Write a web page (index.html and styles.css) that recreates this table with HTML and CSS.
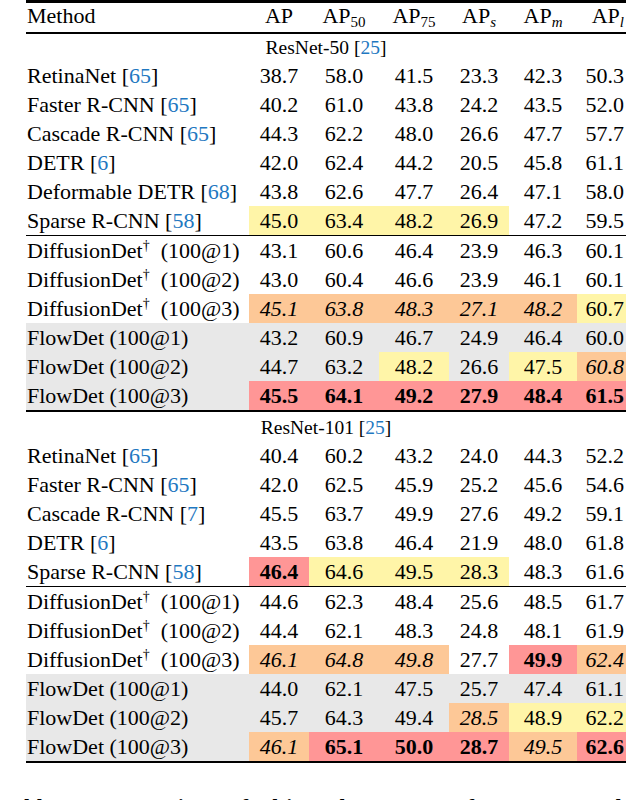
FILE: index.html
```html
<!DOCTYPE html>
<html>
<head>
<meta charset="utf-8">
<link rel="stylesheet" href="styles.css">
</head>
<body>
<table class="results">
  <colgroup>
    <col class="c-method"><col class="c-ap"><col class="c-ap50"><col class="c-ap75"><col class="c-aps"><col class="c-apm"><col class="c-apl">
  </colgroup>
  <thead>
    <tr class="head">
      <th class="method">Method</th>
      <th>AP</th>
      <th>AP<sub>50</sub></th>
      <th>AP<sub>75</sub></th>
      <th>AP<sub class="m">s</sub></th>
      <th>AP<sub class="m">m</sub></th>
      <th class="last">AP<sub class="m">l</sub></th>
    </tr>
  </thead>
  <tbody>
    <tr class="label"><td colspan="7">ResNet-50 [<span class="ref">25</span>]</td></tr>
    <tr><td class="method">RetinaNet [<span class="ref">65</span>]</td><td>38.7</td><td>58.0</td><td>41.5</td><td>23.3</td><td>42.3</td><td class="last">50.3</td></tr>
    <tr><td class="method">Faster R-CNN [<span class="ref">65</span>]</td><td>40.2</td><td>61.0</td><td>43.8</td><td>24.2</td><td>43.5</td><td class="last">52.0</td></tr>
    <tr><td class="method">Cascade R-CNN [<span class="ref">65</span>]</td><td>44.3</td><td>62.2</td><td>48.0</td><td>26.6</td><td>47.7</td><td class="last">57.7</td></tr>
    <tr><td class="method">DETR [<span class="ref">6</span>]</td><td>42.0</td><td>62.4</td><td>44.2</td><td>20.5</td><td>45.8</td><td class="last">61.1</td></tr>
    <tr><td class="method">Deformable DETR [<span class="ref">68</span>]</td><td>43.8</td><td>62.6</td><td>47.7</td><td>26.4</td><td>47.1</td><td class="last">58.0</td></tr>
    <tr class="mid"><td class="method">Sparse R-CNN [<span class="ref">58</span>]</td><td class="y">45.0</td><td class="y">63.4</td><td class="y">48.2</td><td class="y">26.9</td><td>47.2</td><td class="last">59.5</td></tr>
    <tr><td class="method">DiffusionDet<sup>†</sup> &nbsp;(100@1)</td><td>43.1</td><td>60.6</td><td>46.4</td><td>23.9</td><td>46.3</td><td class="last">60.1</td></tr>
    <tr><td class="method">DiffusionDet<sup>†</sup> &nbsp;(100@2)</td><td>43.0</td><td>60.4</td><td>46.6</td><td>23.9</td><td>46.1</td><td class="last">60.1</td></tr>
    <tr><td class="method">DiffusionDet<sup>†</sup> &nbsp;(100@3)</td><td class="o">45.1</td><td class="o">63.8</td><td class="o">48.3</td><td class="o">27.1</td><td class="o">48.2</td><td class="y last">60.7</td></tr>
    <tr class="gray"><td class="method">FlowDet (100@1)</td><td>43.2</td><td>60.9</td><td>46.7</td><td>24.9</td><td>46.4</td><td class="last">60.0</td></tr>
    <tr class="gray"><td class="method">FlowDet (100@2)</td><td>44.7</td><td>63.2</td><td class="y">48.2</td><td>26.6</td><td class="y">47.5</td><td class="o last">60.8</td></tr>
    <tr class="gray end"><td class="method">FlowDet (100@3)</td><td class="r">45.5</td><td class="r">64.1</td><td class="r">49.2</td><td class="r">27.9</td><td class="r">48.4</td><td class="r last">61.5</td></tr>

    <tr class="label label2"><td colspan="7">ResNet-101 [<span class="ref">25</span>]</td></tr>
    <tr><td class="method">RetinaNet [<span class="ref">65</span>]</td><td>40.4</td><td>60.2</td><td>43.2</td><td>24.0</td><td>44.3</td><td class="last">52.2</td></tr>
    <tr><td class="method">Faster R-CNN [<span class="ref">65</span>]</td><td>42.0</td><td>62.5</td><td>45.9</td><td>25.2</td><td>45.6</td><td class="last">54.6</td></tr>
    <tr><td class="method">Cascade R-CNN [<span class="ref">7</span>]</td><td>45.5</td><td>63.7</td><td>49.9</td><td>27.6</td><td>49.2</td><td class="last">59.1</td></tr>
    <tr><td class="method">DETR [<span class="ref">6</span>]</td><td>43.5</td><td>63.8</td><td>46.4</td><td>21.9</td><td>48.0</td><td class="last">61.8</td></tr>
    <tr class="mid"><td class="method">Sparse R-CNN [<span class="ref">58</span>]</td><td class="r">46.4</td><td class="y">64.6</td><td class="y">49.5</td><td class="y">28.3</td><td>48.3</td><td class="last">61.6</td></tr>
    <tr><td class="method">DiffusionDet<sup>†</sup> &nbsp;(100@1)</td><td>44.6</td><td>62.3</td><td>48.4</td><td>25.6</td><td>48.5</td><td class="last">61.7</td></tr>
    <tr><td class="method">DiffusionDet<sup>†</sup> &nbsp;(100@2)</td><td>44.4</td><td>62.1</td><td>48.3</td><td>24.8</td><td>48.1</td><td class="last">61.9</td></tr>
    <tr><td class="method">DiffusionDet<sup>†</sup> &nbsp;(100@3)</td><td class="o">46.1</td><td class="o">64.8</td><td class="o">49.8</td><td>27.7</td><td class="r">49.9</td><td class="o last">62.4</td></tr>
    <tr class="gray"><td class="method">FlowDet (100@1)</td><td>44.0</td><td>62.1</td><td>47.5</td><td>25.7</td><td>47.4</td><td class="last">61.1</td></tr>
    <tr class="gray"><td class="method">FlowDet (100@2)</td><td>45.7</td><td>64.3</td><td>49.4</td><td class="o">28.5</td><td class="y">48.9</td><td class="y last">62.2</td></tr>
    <tr class="gray end"><td class="method">FlowDet (100@3)</td><td class="o">46.1</td><td class="r">65.1</td><td class="r">50.0</td><td class="r">28.7</td><td class="o">49.5</td><td class="r last">62.6</td></tr>
  </tbody>
</table>
<p class="caption">Table 1: Comparison of object detectors performance on the COCO 2017 val set.</p>
</body>
</html>
```

FILE: styles.css
```css
html, body {
  margin: 0;
  padding: 0;
  background: #ffffff;
}
body {
  font-family: "Liberation Serif", "Times New Roman", serif;
  font-size: 22px;
  color: #000;
  width: 638px;
  overflow: hidden;
}
.results {
  margin-left: 26px;
  width: 600px;
  table-layout: fixed;
  border-collapse: separate;
  border-spacing: 0;
  border-top: 3px solid #000;
}
.c-method { width: 223px; }
.c-ap { width: 60px; }
.c-ap50 { width: 70px; }
.c-ap75 { width: 70px; }
.c-aps { width: 60px; }
.c-apm { width: 68px; }
.c-apl { width: 49px; }

.results th,
.results td {
  height: 29px;
  padding: 0;
  text-align: center;
  vertical-align: middle;
  font-weight: normal;
  line-height: 22px;
  white-space: nowrap;
}
.results .method {
  text-align: left;
  padding-left: 1px;
}
.results .last {
  text-align: right;
  padding-right: 2px;
}
.head th {
  height: 25px;
  padding-bottom: 4px;
  border-bottom: 2px solid #000;
}
sub {
  font-size: 15px;
  vertical-align: -4px;
  line-height: 0;
}
sub.m {
  font-style: italic;
}
sup {
  font-size: 14px;
  vertical-align: 8px;
  line-height: 0;
}
.label td {
  height: 27px;
  font-size: 19.5px;
}
.label2 td {
  height: 26px;
  padding-top: 3px;
}
.ref {
  color: #1f78c1;
}
.mid td {
  border-bottom: 1px solid #000;
}
.end td {
  border-bottom: 2px solid #000;
}
.gray td {
  background: #e8e8e8;
}
.results td.y {
  background: #fff5a8;
}
.results td.o {
  background: #fdc897;
  font-style: italic;
}
.results td.r {
  background: #ff9696;
  font-weight: bold;
}
.caption {
  margin: 31px 0 0 0;
  font-weight: bold;
  font-size: 22px;
  text-align: justify;
  line-height: 26px;
  word-spacing: 6px;
  letter-spacing: 0.3px;
}
```
